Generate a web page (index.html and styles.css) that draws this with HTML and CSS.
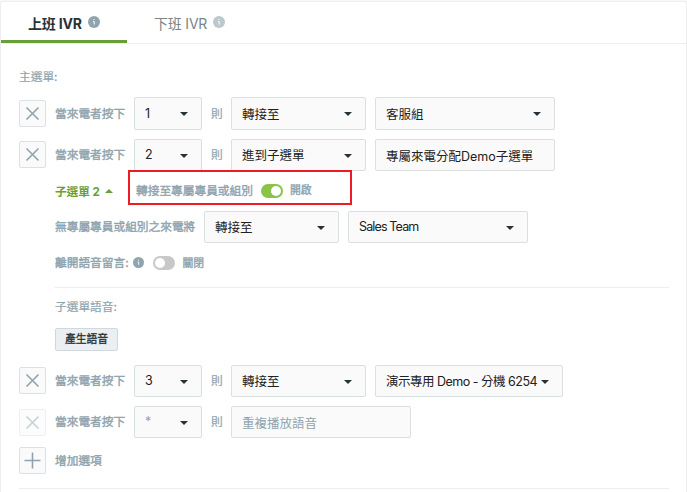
FILE: index.html
```html
<!DOCTYPE html>
<html lang="zh-Hant">
<head>
    <meta charset="UTF-8">
    <meta name="viewport" content="width=device-width, initial-scale=1.0">
    <title>IVR</title>
    <link rel="stylesheet" href="styles.css">
</head>
<body>

    <div class="panel">
        <div class="tabs">
            <div class="tab active">
                <span>上班 IVR</span>
                <svg class="info" viewBox="0 0 12 12"><circle cx="6" cy="6" r="6"/><path d="M5 5.5h1.2v3M5.5 3.5h1"/></svg>
            </div>
            <div class="tab">
                <span>下班 IVR</span>
                <svg class="info" viewBox="0 0 12 12"><circle cx="6" cy="6" r="6"/><path d="M5 5.5h1.2v3M5.5 3.5h1"/></svg>
            </div>
        </div>

        <div class="content">
            <div class="title">主選單:</div>

            <div class="row first">
                <button class="icon-btn"><svg viewBox="0 0 25 25"><path d="M6.5 6.5l12 12M18.5 6.5l-12 12"/></svg></button>
                <span class="label key-label">當來電者按下</span>
                <div class="select key">1</div>
                <span class="label then">則</span>
                <div class="select action">轉接至</div>
                <div class="select target">客服組</div>
            </div>

            <div class="row">
                <button class="icon-btn"><svg viewBox="0 0 25 25"><path d="M6.5 6.5l12 12M18.5 6.5l-12 12"/></svg></button>
                <span class="label key-label">當來電者按下</span>
                <div class="select key">2</div>
                <span class="label then">則</span>
                <div class="select action">進到子選單</div>
                <div class="field">專屬來電分配Demo子選單</div>
            </div>

            <div class="submenu">
                <div class="sub-head">
                    <span class="sub-name">子選單 2</span>
                    <div class="assign">
                        <span class="label">轉接至專屬專員或組別</span>
                        <span class="switch on"></span>
                        <span class="label state">開啟</span>
                        <div class="highlight"></div>
                    </div>
                </div>

                <div class="row sub-row">
                    <span class="label fallback">無專屬專員或組別之來電將</span>
                    <div class="select action">轉接至</div>
                    <div class="select target"><span class="team">Sales Team</span></div>
                </div>

                <div class="voicemail">
                    <span class="label">離開語音留言:</span>
                    <svg class="info" viewBox="0 0 12 12"><circle cx="6" cy="6" r="6"/><path d="M5 5.5h1.2v3M5.5 3.5h1"/></svg>
                    <span class="switch"></span>
                    <span class="label state">關閉</span>
                </div>

                <div class="voice">
                    <div class="label">子選單語音:</div>
                    <button class="btn">產生語音</button>
                </div>
            </div>

            <div class="row">
                <button class="icon-btn"><svg viewBox="0 0 25 25"><path d="M6.5 6.5l12 12M18.5 6.5l-12 12"/></svg></button>
                <span class="label key-label">當來電者按下</span>
                <div class="select key">3</div>
                <span class="label then">則</span>
                <div class="select action">轉接至</div>
                <div class="select target wide">演示專用 Demo - 分機 6254</div>
            </div>

            <div class="row">
                <button class="icon-btn disabled"><svg viewBox="0 0 25 25"><path d="M6.5 6.5l12 12M18.5 6.5l-12 12"/></svg></button>
                <span class="label key-label">當來電者按下</span>
                <div class="select key muted">*</div>
                <span class="label then">則</span>
                <div class="field muted">重複播放語音</div>
            </div>

            <div class="row add">
                <button class="icon-btn"><svg viewBox="0 0 25 25"><path d="M4.5 12.5h16M12.5 4.5v16"/></svg></button>
                <span class="label">增加選項</span>
            </div>
        </div>
    </div>

</body>
</html>
```

FILE: styles.css
```css
* {
    box-sizing: border-box;
}

body {
    margin: 0;
    padding-top: 1px;
    height: 492px;
    overflow: hidden;
    background: #f8f8f8;
    font-family: Inter, "Noto Sans CJK TC", sans-serif;
    font-size: 12.5px;
    color: #263238;
}

.panel {
    height: 491px;
    background: #fff;
    border: 1px solid #eee;
    border-bottom: none;
    border-radius: 3px 3px 0 0;
}

.tabs {
    display: flex;
    height: 42px;
    border-bottom: 1px solid #eee;
}

.tab {
    display: flex;
    align-items: center;
    gap: 6px;
    width: 126px;
    height: 41px;
    padding: 2px 0 0 27px;
    border-bottom: 3px solid transparent;
    font-size: 14px;
    letter-spacing: -0.2px;
    color: #7b8589;
    white-space: nowrap;
}

.tab span {
    padding-top: 1px;
}

.tab.active {
    border-color: #689f38;
    font-weight: bold;
    color: #263238;
}

.info {
    width: 12px;
    height: 12px;
    fill: #90a4ae;
}

.info path {
    fill: none;
    stroke: #fff;
    stroke-width: 1;
}

.tab:not(.active) .info {
    opacity: 0.6;
}

.content {
    margin: 0 17px 0 18px;
    height: 445px;
    border-bottom: 1px solid #eee;
}

.title {
    height: 53px;
    padding-top: 13px;
    line-height: 40px;
    font-size: 11.7px;
    color: #90a4ae;
    -webkit-text-stroke: 0.2px;
}

.row {
    display: flex;
    align-items: center;
    height: 32px;
    margin-bottom: 9px;
}

.row.first {
    height: 33px;
}

.label {
    font-size: 11.7px;
    color: #90a4ae;
    white-space: nowrap;
    -webkit-text-stroke: 0.4px;
}

.row .label {
    padding-bottom: 3px;
}

.icon-btn {
    align-self: flex-start;
    width: 27px;
    height: 27px;
    margin: 2px 9px 0 0;
    padding: 0;
    background: #fafafa;
    border: 1px solid #dce1e3;
    border-radius: 2px;
}

.first .icon-btn {
    margin-top: 3px;
}

.icon-btn svg {
    display: block;
    width: 25px;
    height: 25px;
    fill: none;
    stroke: #90a4ae;
    stroke-width: 1.6;
}

.icon-btn.disabled {
    margin-top: 3px;
    opacity: 0.5;
}

.key-label {
    width: 79px;
}

.row .then {
    width: 29px;
    padding-left: 9px;
    -webkit-text-stroke: 0.2px;
}

.select,
.field {
    display: flex;
    align-items: center;
    justify-content: space-between;
    height: 100%;
    padding: 0 13px 0 10px;
    background: #fafafa;
    border: 1px solid #dadfe1;
    border-radius: 2px;
    color: #212121;
    white-space: nowrap;
}

.select {
    padding-bottom: 1px;
}

.select::after {
    content: "";
    margin-top: 2px;
    border: 4px solid transparent;
    border-top-color: #263238;
    border-bottom: none;
}

.key {
    width: 68px;
}

.action {
    width: 135px;
    margin-right: 9px;
}

.target,
.field {
    width: 180px;
}

.wide {
    width: 188px;
    letter-spacing: -0.5px;
}

.team {
    letter-spacing: -0.85px;
}

.muted {
    color: #90a4ae;
}

.submenu {
    height: 194px;
    margin-top: -9px;
    padding-left: 36px;
}

.sub-head {
    display: flex;
    align-items: center;
    height: 40px;
}

.sub-name {
    display: flex;
    align-items: center;
    gap: 5px;
    width: 81px;
    padding-bottom: 1px;
    font-size: 11.7px;
    letter-spacing: -0.1px;
    font-weight: bold;
    color: #689f38;
}

.sub-name::after {
    content: "";
    border: 4px solid transparent;
    border-bottom-color: #689f38;
    border-top: none;
}

.assign {
    position: relative;
    display: flex;
    align-items: center;
}

.assign .label {
    padding-bottom: 4px;
}

.highlight {
    position: absolute;
    left: -8px;
    top: calc(50% - 21px);
    width: 224px;
    height: 35px;
    border: 2px solid #ed1c24;
}

.switch {
    width: 22px;
    height: 14px;
    margin: 0 7px 0 8px;
    padding: 2px;
    border-radius: 7px;
    background: #c8c8c8;
}

.switch::before {
    content: "";
    display: block;
    width: 10px;
    height: 10px;
    border-radius: 50%;
    background: #fff;
}

.switch.on {
    background: #8bc34a;
}

.switch.on::before {
    margin-left: auto;
}

.label.state {
    font-size: 10.8px;
}

.sub-row {
    margin-bottom: 0;
}

.fallback {
    width: 149px;
}

.voicemail {
    display: flex;
    align-items: center;
    height: 44px;
    padding-bottom: 5px;
}

.voicemail .label {
    padding-bottom: 2px;
}

.voicemail .info {
    width: 11px;
    height: 11px;
    margin-left: 4px;
}

.voicemail .switch {
    margin: 0 8px 0 9px;
}

.voice {
    border-top: 1px solid #eee;
}

.voice .label {
    line-height: 38px;
    margin-bottom: 2px;
    -webkit-text-stroke: 0.2px;
}

.btn {
    display: block;
    width: 63px;
    height: 23px;
    padding: 0;
    background: #eceff1;
    border: 1px solid #cfd8dc;
    border-radius: 2px;
    font-family: inherit;
    font-size: 10.8px;
    line-height: 18px;
    color: #263238;
    -webkit-text-stroke: 0.3px;
}

.add {
    height: 27px;
}

.add .icon-btn {
    margin-top: 0;
}
```
